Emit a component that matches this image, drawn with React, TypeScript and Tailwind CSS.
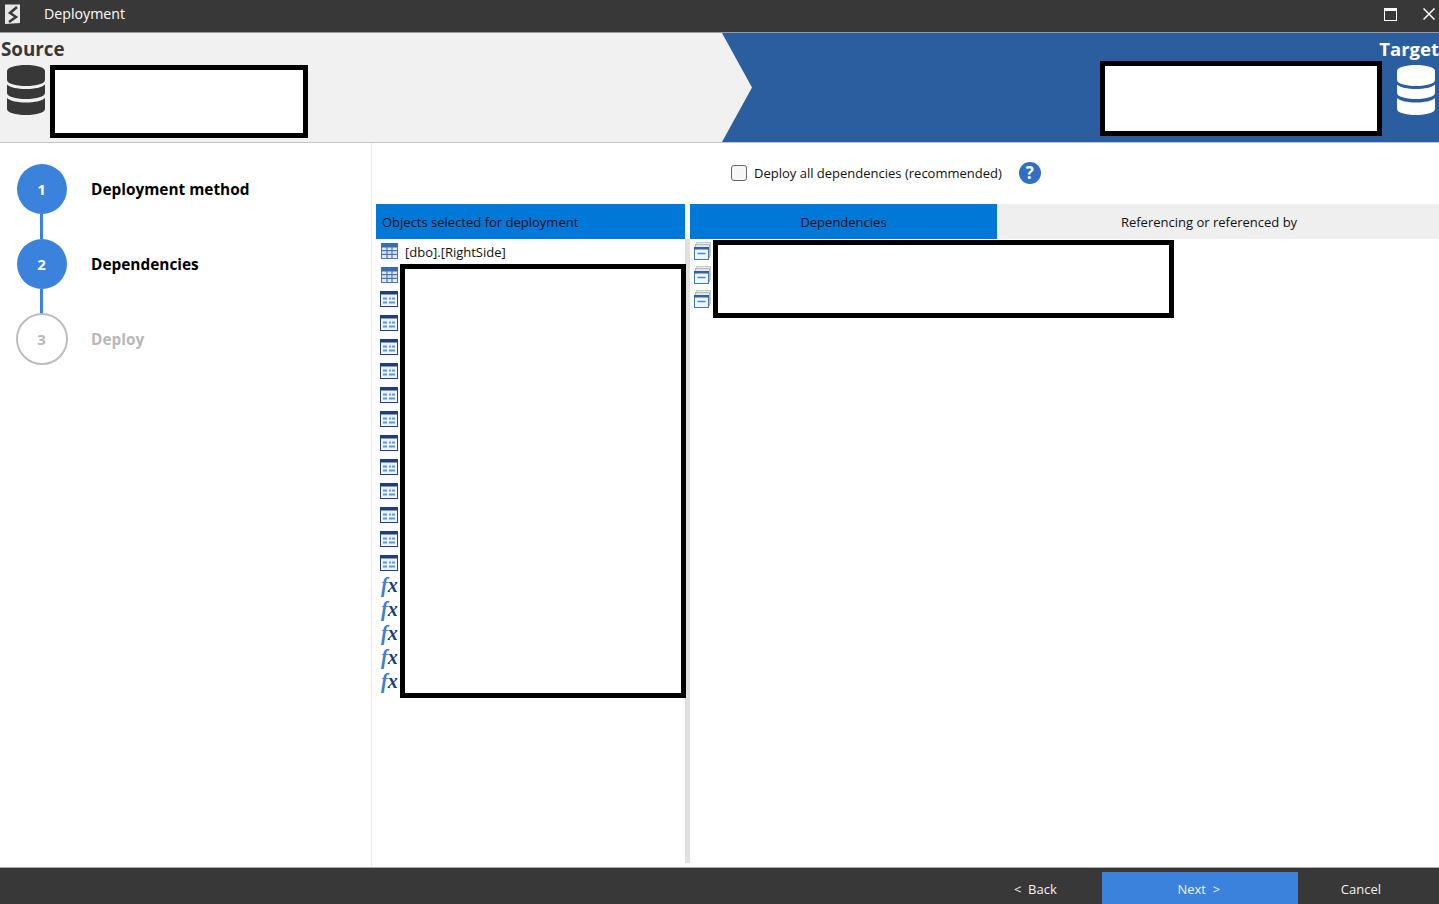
import React from "react";

function Db({ color }: { color: string }) {
  return (
    <svg width="38" height="50" viewBox="0 0 38 50" fill={color} className="block">
      <path d="M0 6C0 2.5 8.5 0 19 0s19 2.5 19 6v9c0 3.5-8.5 6-19 6S0 18.500 0 15z" />
      <path d="M0 19.500C3 22.500 10.500 24 19 24s16-1.500 19-4.500V28c0 3.500-8.500 6-19 6S0 31.500 0 28z" />
      <path d="M0 33c3 3 10.500 4.500 19 4.500S35 36 38 33v11c0 3.500-8.500 6-19 6S0 47.500 0 44z" />
    </svg>
  );
}

function TableIcon() {
  return (
    <svg width="17" height="16" viewBox="0 0 17 16" className="block ml-[1px]">
      <rect x="0.500" y="0.500" width="16" height="15" fill="#dfe9f6" stroke="#4a78b6" />
      <rect x="0.500" y="0.500" width="16" height="3.500" fill="#3a6cb0" stroke="#3a6cb0" />
      <path d="M6 4v11M11 4v11M1 7.700h15M1 11.300h15" stroke="#4a78b6" strokeWidth="1.200" />
    </svg>
  );
}

function FormIcon() {
  return (
    <svg width="18" height="16" viewBox="0 0 18 16" className="block">
      <rect x="0.500" y="0.500" width="17" height="15" fill="#eef3fa" stroke="#23447a" />
      <rect x="0.500" y="0.500" width="17" height="3" fill="#1f3f73" />
      <path d="M3 6.500h4v2H3zM9 6.500h2v2H9zM12 6.500h3v2h-3zM3 10.500h4v2H3zM9 10.500h6v2H9z" fill="#5b97de" />
    </svg>
  );
}

function DepIcon() {
  return (
    <svg width="17" height="18" viewBox="0 0 17 18" className="block">
      <rect x="2.500" y="0.500" width="14" height="13" fill="#eeeeee" stroke="#c8c8c8" />
      <rect x="1.500" y="2.500" width="14" height="13" fill="#e6e6e6" stroke="#b8b8b8" />
      <rect x="0.500" y="5.500" width="14" height="12" fill="#f2f6fb" stroke="#3f78b8" />
      <rect x="0" y="5" width="15" height="2.500" fill="#2f62a8" />
      <path d="M3.500 11.500h8" stroke="#3f87dc" strokeWidth="1.500" />
    </svg>
  );
}

function FxIcon() {
  return (
    <span className="block w-[18px] h-[20px] ml-[1px] mb-[4px] leading-[20px] text-[20px] font-bold italic font-['Liberation_Serif',serif] whitespace-nowrap">
      <span className="text-[#3a7fd0]">f</span>
      <span className="text-[#1f3f73]">x</span>
    </span>
  );
}

function Redacted({ className }: { className: string }) {
  return <div className={`absolute bg-white border-[5px] border-black ${className}`} />;
}

function Step({ n, label, active }: { n: number; label: string; active: boolean }) {
  return (
    <div className="flex items-center">
      <div
        className={
          active
            ? "w-[50px] h-[50px] rounded-full bg-[#3b82dc] flex items-center justify-center text-white font-bold text-[15px] pr-[1px]"
            : "w-[52px] h-[52px] -ml-[1px] -my-[1px] rounded-full border-2 border-[#bdbdbd] bg-white flex items-center justify-center text-[#b8b8b8] font-bold text-[15px] pr-[1px]"
        }
      >
        {n}
      </div>
      <div className={`mt-[2px] text-[15.400px] font-bold ${active ? "ml-[24px] text-black" : "ml-[23px] text-[#b8b8b8]"}`}>{label}</div>
    </div>
  );
}

export default function App() {
  const rows = [
    ...Array(2).fill("t"),
    ...Array(12).fill("v"),
    ...Array(5).fill("f"),
  ] as string[];
  return (
    <div className="w-[1439px] h-[904px] flex flex-col overflow-hidden bg-white font-['Open_Sans',sans-serif] text-[13px] text-[#111111]">
      <div className="h-[33px] shrink-0 bg-[#383838] border-b border-[#9a9a9a] flex items-center pb-[4px] text-white">
        <svg width="16" height="20" viewBox="0 0 16 20" className="ml-[5px] block">
          <path d="M0 0.500h15v18.500l-15 1z" fill="#e8e8e8" />
          <path d="M12 3L5 9l6 4-7 5" fill="none" stroke="#383838" strokeWidth="2.500" />
        </svg>
        <div className="ml-[23px] text-[14.200px]">Deployment</div>
        <div className="ml-auto flex items-center">
          <svg width="13" height="13" viewBox="0 0 13 13" className="block">
            <rect x="0.500" y="0.500" width="12" height="12" fill="none" stroke="#fff" />
            <rect x="0" y="0" width="13" height="3" fill="#fff" />
          </svg>
          <svg width="12" height="12" viewBox="0 0 12 12" className="block ml-[26px] mr-[4px]">
            <path d="M0.500 0.500l11 11M11.500 0.500l-11 11" stroke="#fff" strokeWidth="1.500" />
          </svg>
        </div>
      </div>

      <div className="relative h-[110px] shrink-0 bg-[#f1f1f1] border-b border-[#c4c4c4] flex">
        <div className="w-[722px] pl-[1px]">
          <div className="text-[18.800px] font-bold text-[#383838] leading-[27px] mt-[3px]">Source</div>
          <div className="ml-[6px] mt-[2px]">
            <Db color="#383838" />
          </div>
        </div>
        <div className="flex-1 bg-[#2a5e9e] [clip-path:polygon(0_0,100%_0,100%_100%,0_100%,30px_50%)] flex flex-col items-end">
          <div className="text-[18.500px] font-bold text-white leading-[27px] mt-[2px]">Target</div>
          <div className="mr-[4px] mt-[3px]">
            <Db color="#ffffff" />
          </div>
        </div>
        <Redacted className="left-[50px] top-[32px] w-[258px] h-[73px]" />
        <Redacted className="left-[1100px] top-[28px] w-[282px] h-[75px]" />
      </div>

      <div className="flex-1 flex min-h-0">
        <div className="w-[372px] shrink-0 border-r border-[#ececec] pl-[17px] pt-[21px]">
          <Step n={1} label="Deployment method" active />
          <div className="ml-[23px] w-[3px] h-[25px] bg-[#3b82dc]" />
          <Step n={2} label="Dependencies" active />
          <div className="ml-[23px] w-[3px] h-[25px] bg-[#3b82dc]" />
          <Step n={3} label="Deploy" active={false} />
        </div>

        <div className="flex-1 flex flex-col pl-[4px] min-w-0">
          <div className="h-[61px] shrink-0 flex items-start pl-[355px] pt-[19px]">
            <div className="w-[16px] h-[16px] mt-[3px] rounded-[3px] border border-[#666] bg-[#f6f6f6]" />
            <div className="ml-[7px] leading-[22px]">Deploy all dependencies (recommended)</div>
            <div className="ml-[17px] w-[22px] h-[22px] rounded-full bg-[#2f6fc4] flex items-center justify-center text-white font-bold text-[17px]">?</div>
          </div>
          <div className="flex flex-1 min-h-0">
            <div className="w-[309px] shrink-0 flex flex-col">
              <div className="h-[35px] shrink-0 bg-[#0078d7] flex items-center pl-[6px] pt-[2px]">Objects selected for deployment</div>
              <div className="relative flex-1">
                <div className="flex flex-col pl-[4px]">
                  {rows.map((r, i) => (
                    <div key={i} className="h-[24px] flex items-center">
                      {r === "t" ? <TableIcon /> : r === "v" ? <FormIcon /> : <FxIcon />}
                      {i === 0 && <span className="ml-[7px] mt-[4px]">[dbo].[RightSide]</span>}
                    </div>
                  ))}
                </div>
                <Redacted className="left-[24px] top-[25px] w-[286px] h-[434px]" />
              </div>
            </div>
            <div className="w-[5px] shrink-0 flex flex-col pt-[35px] pb-[4px]">
              <div className="flex-1 bg-[#e0e0e0]" />
            </div>
            <div className="flex-1 flex flex-col min-w-0">
              <div className="h-[35px] shrink-0 flex">
                <div className="w-[307px] bg-[#0078d7] flex items-center justify-center pt-[2px]">Dependencies</div>
                <div className="flex-1 bg-[#efefef] flex items-center justify-center pt-[2px] pr-[18px]">Referencing or referenced by</div>
              </div>
              <div className="relative flex-1">
                <div className="flex flex-col pl-[4px]">
                  {[0, 1, 2].map((i) => (
                    <div key={i} className="h-[24px] flex items-center">
                      <DepIcon />
                    </div>
                  ))}
                </div>
                <Redacted className="left-[23px] top-[1px] w-[461px] h-[78px]" />
              </div>
            </div>
          </div>
        </div>
      </div>

      <div className="h-[37px] shrink-0 bg-[#383838] border-t border-[#a8a8a8] flex items-end text-[#f2f2f2]">
        <div className="ml-auto flex items-center h-[32px]">
          <div className="mr-[45px] whitespace-pre pt-[4px]">&lt;  Back</div>
          <div className="w-[196px] h-[32px] bg-[#3b82dc] flex items-center justify-center whitespace-pre pt-[4px] pr-[2px]">Next  &gt;</div>
          <div className="ml-[43px] mr-[58px] pt-[4px]">Cancel</div>
        </div>
      </div>
    </div>
  );
}
